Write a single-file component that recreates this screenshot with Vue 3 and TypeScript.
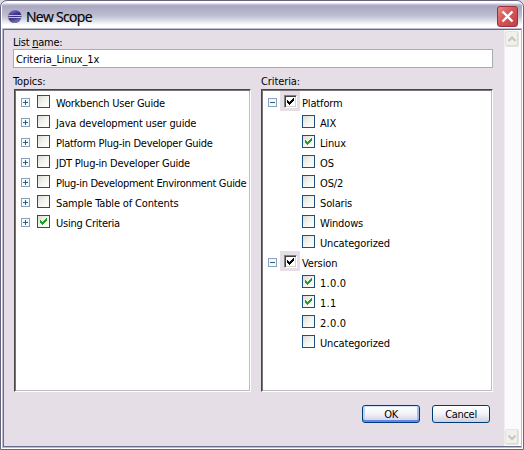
<script setup lang="ts">
import { ref } from 'vue'

interface Item { label: string; checked: boolean; tracking?: number }
interface Group { label: string; items: Item[] }

const listName = ref('Criteria_Linux_1x')

const topics = ref<Item[]>([
  { label: 'Workbench User Guide', checked: false, tracking: -0.22 },
  { label: 'Java development user guide', checked: false, tracking: -0.17 },
  { label: 'Platform Plug-in Developer Guide', checked: false, tracking: -0.26 },
  { label: 'JDT Plug-in Developer Guide', checked: false, tracking: -0.22 },
  { label: 'Plug-in Development Environment Guide', checked: false, tracking: -0.32 },
  { label: 'Sample Table of Contents', checked: false, tracking: -0.15 },
  { label: 'Using Criteria', checked: true, tracking: -0.25 },
])

const groups = ref<Group[]>([
  {
    label: 'Platform',
    items: [
      { label: 'AIX', checked: false },
      { label: 'Linux', checked: true },
      { label: 'OS', checked: false },
      { label: 'OS/2', checked: false },
      { label: 'Solaris', checked: false },
      { label: 'Windows', checked: false },
      { label: 'Uncategorized', checked: false },
    ],
  },
  {
    label: 'Version',
    items: [
      { label: '1.0.0', checked: true, tracking: 0.25 },
      { label: '1.1', checked: true, tracking: 0.25 },
      { label: '2.0.0', checked: false, tracking: 0.25 },
      { label: 'Uncategorized', checked: false },
    ],
  },
])

const track = (item: Item) => ({ letterSpacing: `${item.tracking ?? -0.15}px` })
</script>

<template>
  <div class="window">
    <header class="titlebar">
      <svg class="logo" width="15" height="15" viewBox="0 0 15 15">
        <defs>
          <linearGradient id="orb" x1="0" y1="0" x2="0.35" y2="1">
            <stop offset="0" stop-color="#9d98d4" />
            <stop offset="0.35" stop-color="#4c46a0" />
            <stop offset="0.6" stop-color="#332c74" />
            <stop offset="1" stop-color="#716cb8" />
          </linearGradient>
        </defs>
        <circle cx="6.6" cy="7.5" r="6.4" fill="#d9a99c" />
        <circle cx="7.9" cy="7.5" r="6.6" fill="url(#orb)" />
        <path d="M1.500 6.500h13M1.500 8.500h13" stroke="#c0c4ec" stroke-width="1" />
      </svg>
      <h1 class="title">New Scope</h1>
      <button class="close" aria-label="Close">
        <svg width="19" height="19" viewBox="0 0 19 19">
          <path d="M4.500 4.500l10 10M14.500 4.500l-10 10" stroke="#fff" stroke-width="2.300" />
        </svg>
      </button>
    </header>

    <div class="client">
      <main class="content">
        <label class="caption" for="list-name">List <u>n</u>ame:</label>
        <input id="list-name" v-model="listName" class="field" spellcheck="false" />

        <div class="panes">
          <section>
            <h2 class="caption">Topics:</h2>
            <ul class="tree topics">
              <li v-for="t in topics" :key="t.label" class="row">
                <svg class="expander" width="9" height="9" viewBox="0 0 9 9">
                  <rect x=".5" y=".5" width="8" height="8" fill="#f3fafd" stroke="#8ca0c0" />
                  <path d="M2 4.500h5M4.500 2v5" stroke="#2f6078" />
                </svg>
                <span class="check">
                  <svg v-if="t.checked" width="11" height="11" viewBox="0 0 11 11">
                    <path d="M2 4v3l2 2 5-5V1L4 6z" fill="#21a121" shape-rendering="crispEdges" />
                  </svg>
                </span>
                <span class="label" :style="track(t)">{{ t.label }}</span>
              </li>
            </ul>
          </section>

          <section>
            <h2 class="caption">Criteria:</h2>
            <ul class="tree criteria">
              <template v-for="g in groups" :key="g.label">
                <li class="row">
                  <svg class="expander" width="9" height="9" viewBox="0 0 9 9">
                    <rect x=".5" y=".5" width="8" height="8" fill="#f3fafd" stroke="#8ca0c0" />
                    <path d="M2 4.500h5" stroke="#2f6078" />
                  </svg>
                  <span class="halo">
                    <span class="classic">
                      <svg width="9" height="9" viewBox="0 0 9 9">
                        <path d="M1 3v3l2 2 5-5V0L3 5z" fill="#000" shape-rendering="crispEdges" />
                      </svg>
                    </span>
                  </span>
                  <span class="label">{{ g.label }}</span>
                </li>
                <li v-for="c in g.items" :key="c.label" class="row child">
                  <span class="check">
                    <svg v-if="c.checked" width="11" height="11" viewBox="0 0 11 11">
                      <path d="M2 4v3l2 2 5-5V1L4 6z" fill="#21a121" shape-rendering="crispEdges" />
                    </svg>
                  </span>
                  <span class="label" :style="track(c)">{{ c.label }}</span>
                </li>
              </template>
            </ul>
          </section>
        </div>

        <footer class="actions">
          <button class="btn primary">OK</button>
          <button class="btn">Cancel</button>
        </footer>
      </main>

      <aside class="scrollbar">
        <span class="arrow">
          <svg width="12" height="14" viewBox="0 0 12 14"><path d="M2.500 9L6 5.500 9.500 9" fill="none" stroke="#c9c8c0" stroke-width="2.200" /></svg>
        </span>
        <span class="arrow">
          <svg width="12" height="14" viewBox="0 0 12 14"><path d="M2.500 5.500L6 9l3.500-3.500" fill="none" stroke="#c9c8c0" stroke-width="2.200" /></svg>
        </span>
      </aside>
    </div>
  </div>
</template>

<style>
body { background: #d9dbe6; }
</style>

<style scoped>
.window {
  box-sizing: border-box;
  width: 524px;
  height: 450px;
  display: flex;
  flex-direction: column;
  padding: 1px 2px 2px;
  border: 1px solid #65657f;
  border-radius: 7px 7px 0 0;
  background: #fff;
  box-shadow: inset 0 0 0 1px #fff, inset 0 0 0 2px #bdbccc;
  font-family: "DejaVu Sans Condensed", "DejaVu Sans", sans-serif;
  font-stretch: condensed;
  font-size: 11px;
  letter-spacing: -0.15px;
  color: #000;
}
.titlebar {
  box-sizing: border-box;
  height: 27px;
  margin: 0 -1px;
  flex: none;
  display: flex;
  align-items: center;
  padding: 1px 4px 0 5px;
  border-radius: 5px 5px 0 0;
  background: linear-gradient(#fff 0, #fff 1px, #c9c7d8 2px, #a9a6c0 4px, #b0b0c8 8px, #bfc0d2 14px, #e0e1ea 19px, #fff 23px, #fff 26px, #bcc0d4 26px);
}
.title {
  margin: 1px 0 0 4px;
  font: 500 14px/20px "Open Sans", sans-serif;
  letter-spacing: -0.7px;
  flex: 1;
  -webkit-text-stroke: 0.2px #000;
}
.close {
  box-sizing: border-box;
  width: 21px;
  height: 21px;
  padding: 0;
  border: 1px solid #96313e;
  border-radius: 3px;
  background: linear-gradient(135deg, #e58c86, #d95555 45%, #c43f49);
  display: grid;
  place-items: center;
}
.client {
  flex: 1;
  min-height: 0;
  display: flex;
  border: 1px solid #686c88;
  background: #e5dee6;
}
.content {
  flex: 1;
  padding: 5px 11px 0 9px;
}
.caption {
  display: block;
  box-sizing: border-box;
  margin: 0;
  height: 14px;
  padding-top: 1px;
  font-size: 11px;
  font-weight: normal;
  line-height: 14px;
  letter-spacing: -0.25px;
}
.field {
  display: block;
  box-sizing: border-box;
  width: 480px;
  height: 19px;
  padding: 1px 1px 0 2px;
  border: 1px solid #a5acb2;
  background: #fff;
  font: inherit;
  letter-spacing: -0.12px;
  outline: none;
}
.panes {
  display: flex;
  gap: 10px;
  margin-top: 6px;
}
.panes .caption { height: 15px; letter-spacing: -0.1px; }
.tree {
  box-sizing: border-box;
  height: 303px;
  margin: 0;
  padding: 0;
  list-style: none;
  background: #fff;
  border: 1px solid;
  border-color: #454545 #fff #fff #454545;
  box-shadow: inset 1px 1px #777577, inset -1px -1px #c0bdc0;
}
.topics { width: 237px; margin-left: 1px; }
.criteria { width: 232px; }
.row {
  display: flex;
  align-items: center;
  height: 20px;
  padding-left: 6px;
  white-space: nowrap;
}
.row > * { flex: none; }
.tree .row:first-child { margin-top: 1px; }
.row.child { padding-left: 40px; }
.expander { margin-top: 2px; }
.check {
  box-sizing: border-box;
  width: 13px;
  height: 13px;
  border: 1px solid #1c5180;
  background: linear-gradient(135deg, #dcdcd7, #f3f3ef 50%, #fff);
}
.check svg { display: block; }
.topics .check { margin-left: 7px; }
.label {
  box-sizing: border-box;
  height: 20px;
  margin-left: 5px;
  padding-top: 4px;
  line-height: 18px;
}
.topics .label { margin-left: 6px; }
.halo {
  box-sizing: border-box;
  width: 20px;
  height: 20px;
  margin-left: 3px;
  padding: 4px 3px 3px 4px;
  background: #e5dee6;
}
.halo + .label { margin-left: 2px; }
.classic {
  box-sizing: border-box;
  display: block;
  width: 13px;
  height: 13px;
  padding: 1px;
  border: 1px solid;
  border-color: #848284 #fff #fff #848284;
  background: #fff;
  box-shadow: inset 1px 1px #424142, inset -1px -1px #d5d2cd;
}
.classic svg { display: block; }
.actions {
  display: flex;
  justify-content: flex-end;
  gap: 12px;
  margin-top: 13px;
  padding-right: 3px;
}
.btn {
  box-sizing: border-box;
  width: 58px;
  height: 18px;
  padding: 1px 0 0;
  border: 1px solid #003c74;
  border-radius: 3px;
  background: linear-gradient(#fff, #f3f2f8 50%, #cfcfe0);
  font: inherit;
  line-height: 15px;
  letter-spacing: -0.3px;
}
.btn.primary { box-shadow: inset 0 1px #cee7ff, inset 0 -2px #6982ee, inset 2px 0 #bcd4f6, inset -2px 0 #a4bdf0; }
.scrollbar {
  box-sizing: border-box;
  width: 17px;
  padding: 1px 2px 1px 0;
  display: flex;
  flex-direction: column;
  justify-content: space-between;
  background: #fdfafe;
  border-left: 1px solid #efedf0;
}
.arrow {
  box-sizing: border-box;
  height: 16px;
  border: 1px solid #e6e5dc;
  border-radius: 2px;
  background: #f1f0ec;
  box-shadow: inset -1px -1px #dcdccd;
  display: grid;
  place-items: center;
}
</style>
